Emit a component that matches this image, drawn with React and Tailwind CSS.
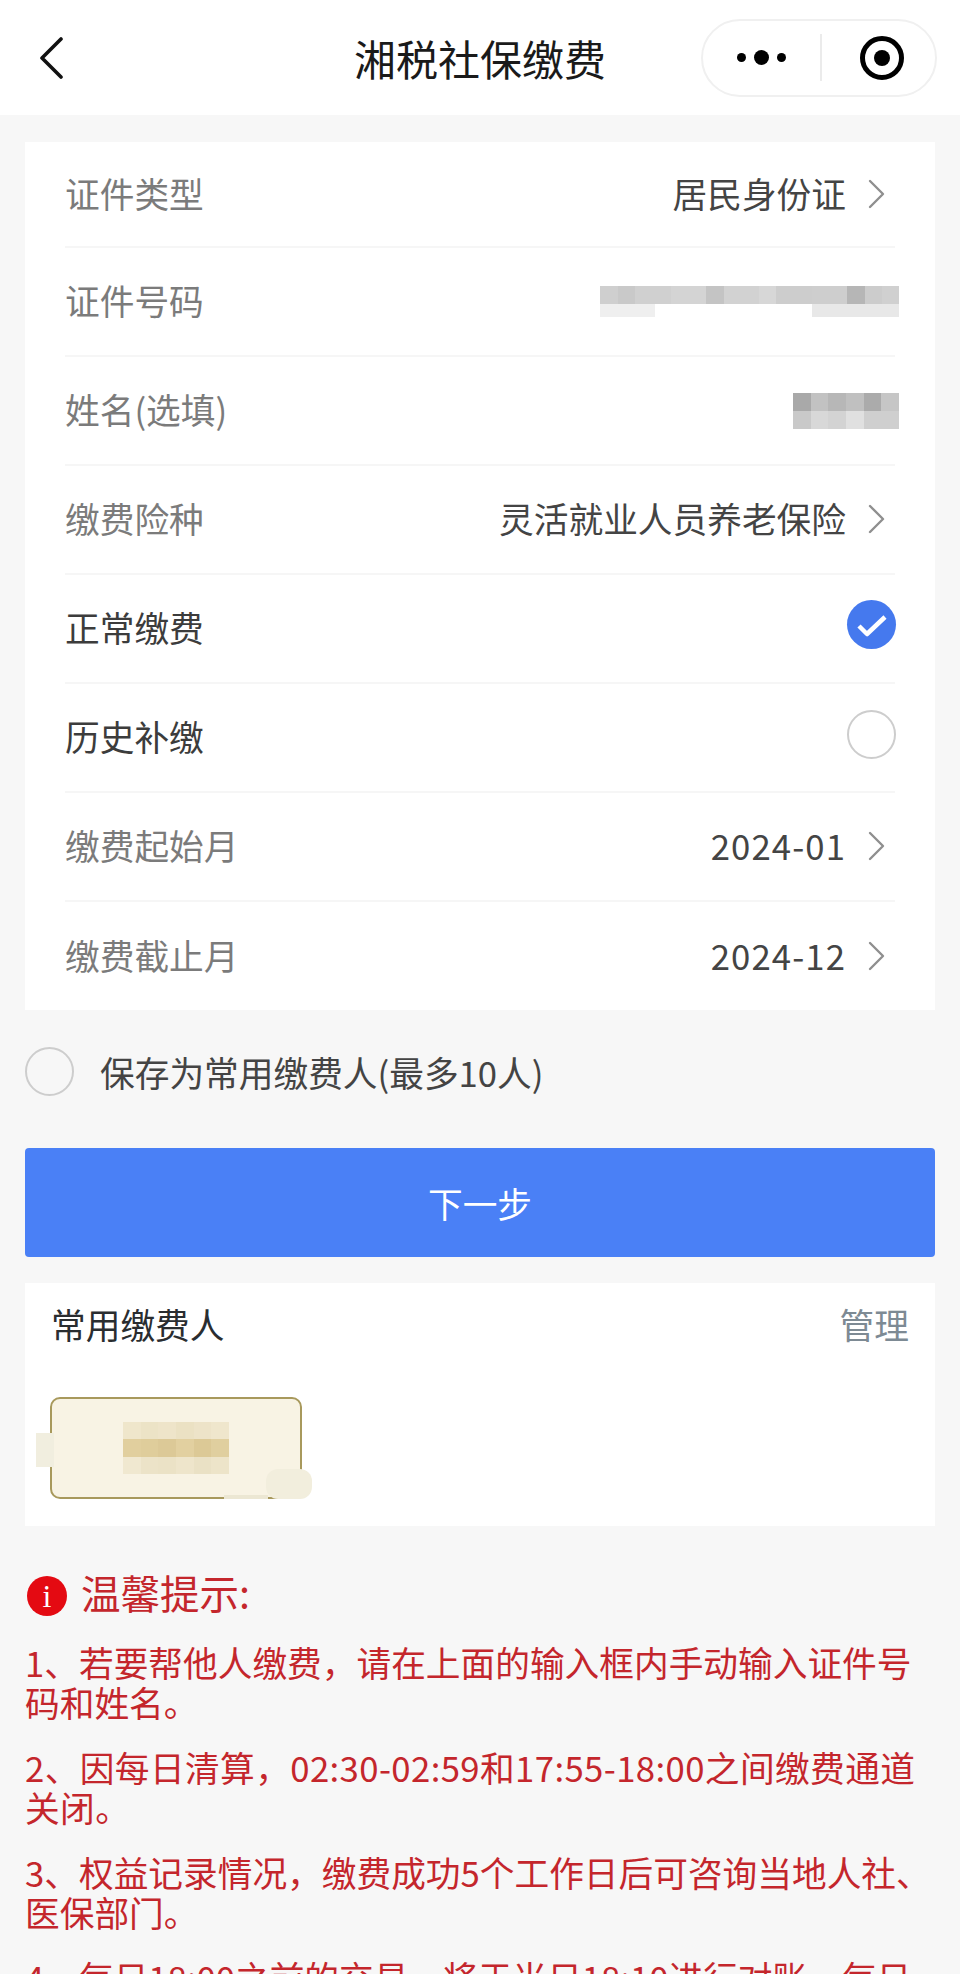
const FONT = "font-['Noto_Sans_CJK_SC','Noto_Sans',sans-serif]";

// 打码块：每一格颜色都写死
const idMosaicTop = [
  "w-[18px] bg-[#cfcfcf]", "w-[18px] bg-[#c9c9c9]", "w-[36px] bg-[#d0d0d0]", "w-[36px] bg-[#d4d4d4]",
  "w-[18px] bg-[#c4c4c4]", "w-[36px] bg-[#d2d2d2]", "w-[18px] bg-[#d7d7d7]", "w-[36px] bg-[#cdcdcd]",
  "w-[36px] bg-[#cecece]", "w-[18px] bg-[#b6b6b6]", "w-[18px] bg-[#cccccc]", "w-[17px] bg-[#d0d0d0]",
];
const nameMosaicTop = ["bg-[#a9a9a9]", "bg-[#c2c2c2]", "bg-[#b7b7b7]", "bg-[#c0c0c0]", "bg-[#ababab]", "bg-[#c6c6c6]"];
const nameMosaicBottom = ["bg-[#c9c9c9]", "bg-[#d8d8d8]", "bg-[#d3d3d3]", "bg-[#e0e0e0]", "bg-[#cfcfcf]", "bg-[#cfcfcf]"];
const chipMosaic = [
  ["bg-[#efe6cb]", "bg-[#ece3c6]", "bg-[#eee4c9]", "bg-[#ebe1c3]", "bg-[#ede3c8]", "bg-[#efe6cc]"],
  ["bg-[#e1cf9e]", "bg-[#dfcd9b]", "bg-[#dcc997]", "bg-[#e2d0a0]", "bg-[#dcc996]", "bg-[#e0cf9f]"],
  ["bg-[#f0e8d0]", "bg-[#ece3c8]", "bg-[#ebe2c6]", "bg-[#eee5cb]", "bg-[#eae1c5]", "bg-[#ede4c9]"],
];

function Chevron() {
  return (
    <svg width="18" height="30" viewBox="0 0 18 30" fill="none" className="ml-[22px] mr-[9px] mt-[2px] shrink-0">
      <path d="M2 2l13 13L2 28" stroke="#8f8f8f" strokeWidth="2.4" strokeLinecap="round" strokeLinejoin="round" />
    </svg>
  );
}

function Row({ label, labelColor = "text-[#7b7b7b]", height = "h-[109px]", last, children }) {
  return (
    <div
      className={`flex items-center justify-between pb-[3px] ${height} ${
        last ? "" : "border-b-2 border-[#f6f6f6]"
      }`}
    >
      <span className={labelColor}>{label}</span>
      <div className="flex items-center text-[#444444]">{children}</div>
    </div>
  );
}

function Circle() {
  return <div className="w-[49px] h-[49px] rounded-full border-[2.5px] border-[#cdcdcd]" />;
}

export default function App() {
  return (
    <div className={`${FONT} w-[960px] h-[1974px] overflow-hidden bg-[#f7f7f7] text-[34.7px] leading-[40px]`}>
      {/* 顶部导航 */}
      <header className="grid grid-cols-[1fr_auto_1fr] items-center h-[115px] bg-white px-[23px]">
        <svg width="24" height="42" viewBox="0 0 24 42" fill="none" className="ml-[16px]">
          <path d="M22 2L3 21l19 19" stroke="#111111" strokeWidth="3.6" strokeLinecap="round" strokeLinejoin="round" />
        </svg>
        <h1 className="text-[42px] text-[#1a1a1a]">湘税社保缴费</h1>
        <div className="justify-self-end flex items-center w-[236px] h-[78px] rounded-full border-2 border-[#f0f0f0]">
          <div className="flex items-center justify-center gap-[8px] w-[117px]">
            <span className="w-[9px] h-[9px] rounded-full bg-black" />
            <span className="w-[15px] h-[15px] rounded-full bg-black" />
            <span className="w-[9px] h-[9px] rounded-full bg-black" />
          </div>
          <div className="w-[2px] h-[47px] bg-[#ebebeb]" />
          <div className="flex items-center justify-center flex-1 pl-[6px]">
            <div className="flex items-center justify-center w-[44px] h-[44px] rounded-full border-[5px] border-black">
              <span className="w-[16px] h-[16px] rounded-full bg-black" />
            </div>
          </div>
        </div>
      </header>

      {/* 表单 */}
      <section className="mt-[27px] mx-[25px] bg-white px-[40px]">
        <Row label="证件类型" height="h-[106px]">
          居民身份证
          <Chevron />
        </Row>
        <Row label="证件号码">
          <div className="flex flex-col w-[299px] -mr-[4px] mt-[2px]">
            <div className="flex h-[18px]">
              {idMosaicTop.map((c, i) => (
                <div key={i} className={c} />
              ))}
            </div>
            <div className="flex justify-between h-[13px]">
              <div className="w-[55px] bg-[#efefef]" />
              <div className="w-[87px] bg-[#e8e8e8]" />
            </div>
          </div>
        </Row>
        <Row label="姓名(选填)">
          <div className="w-[106px] -mr-[4px] mt-[3px]">
            <div className="grid grid-cols-6 h-[18px]">
              {nameMosaicTop.map((c, i) => (
                <div key={i} className={c} />
              ))}
            </div>
            <div className="grid grid-cols-6 h-[18px]">
              {nameMosaicBottom.map((c, i) => (
                <div key={i} className={c} />
              ))}
            </div>
          </div>
        </Row>
        <Row label="缴费险种">
          灵活就业人员养老保险
          <Chevron />
        </Row>
        <Row label="正常缴费" labelColor="text-[#3c3c3c]">
          <div className="flex items-center justify-center w-[49px] h-[49px] -mr-px rounded-full bg-[#4579ee] -mt-[5px]">
            <svg width="32" height="26" viewBox="0 0 32 26" fill="none">
              <path d="M3 14l8 8L29 5" stroke="#ffffff" strokeWidth="4.5" strokeLinejoin="round" />
            </svg>
          </div>
        </Row>
        <Row label="历史补缴" labelColor="text-[#3c3c3c]">
          <div className="-mr-px -mt-[3px]">
            <Circle />
          </div>
        </Row>
        <Row label="缴费起始月">
          <span className="tracking-[1.1px]">2024-01</span>
          <Chevron />
        </Row>
        <Row label="缴费截止月" last height="h-[108px]">
          <span className="tracking-[1.1px]">2024-12</span>
          <Chevron />
        </Row>
      </section>

      {/* 保存 */}
      <label className="flex items-center gap-[26px] mt-[37px] mx-[25px] text-[#444444]">
        <Circle />
        <span>保存为常用缴费人(最多10人)</span>
      </label>

      <button className="block w-[910px] h-[109px] mt-[52px] mx-[25px] rounded-[4px] bg-[#4a80f6] text-white">
        下一步
      </button>

      {/* 常用缴费人 */}
      <section className="mt-[26px] mx-[25px] h-[243px] bg-white px-[26px]">
        <div className="flex items-center justify-between h-[81px]">
          <span className="text-[#2a2d30]">常用缴费人</span>
          <span className="text-[#7d8a94]">管理</span>
        </div>
        <div className="relative flex items-center justify-center w-[252px] h-[102px] mt-[33px] -ml-px rounded-[10px] border-2 border-[#a8995c] bg-[#f8f3e4]">
          <div className="w-[106px]">
            {chipMosaic.map((row, i) => (
              <div key={i} className="grid grid-cols-6 h-[17.5px]">
                {row.map((c, j) => (
                  <div key={j} className={c} />
                ))}
              </div>
            ))}
          </div>
          <div className="absolute -left-[16px] top-[34px] w-[18px] h-[34px] bg-[#f1eedf]" />
          <div className="absolute right-[32px] -bottom-[2px] w-[44px] h-[4px] bg-[#ece7d3]" />
          <div className="absolute -right-[12px] -bottom-[2px] w-[46px] h-[30px] rounded-[12px] bg-[#f2eedd]" />
        </div>
      </section>

      {/* 温馨提示 */}
      <section className="mx-[25px] text-[#c4262c]">
        <div className="flex items-center gap-[14px] mt-[50px] mb-[26px] ml-[2px] h-[40px]">
          <div className="flex items-center justify-center w-[40px] h-[40px] rounded-full bg-[#e40a12] text-white text-[32px] font-['Liberation_Serif',serif]">
            i
          </div>
          <span className="text-[39.5px] -mt-[8px]">温馨提示:</span>
        </div>
        <p className="mb-[25px]">1、若要帮他人缴费，请在上面的输入框内手动输入证件号码和姓名。</p>
        <p className="mb-[25px] tracking-[0.4px]">2、因每日清算，02:30-02:59和17:55-18:00之间缴费通道关闭。</p>
        <p className="mb-[25px]">3、权益记录情况，缴费成功5个工作日后可咨询当地人社、医保部门。</p>
        <p className="mb-[25px]">4、每日18:00之前的交易，将于当日18:10进行对账，每日</p>
      </section>
    </div>
  );
}
